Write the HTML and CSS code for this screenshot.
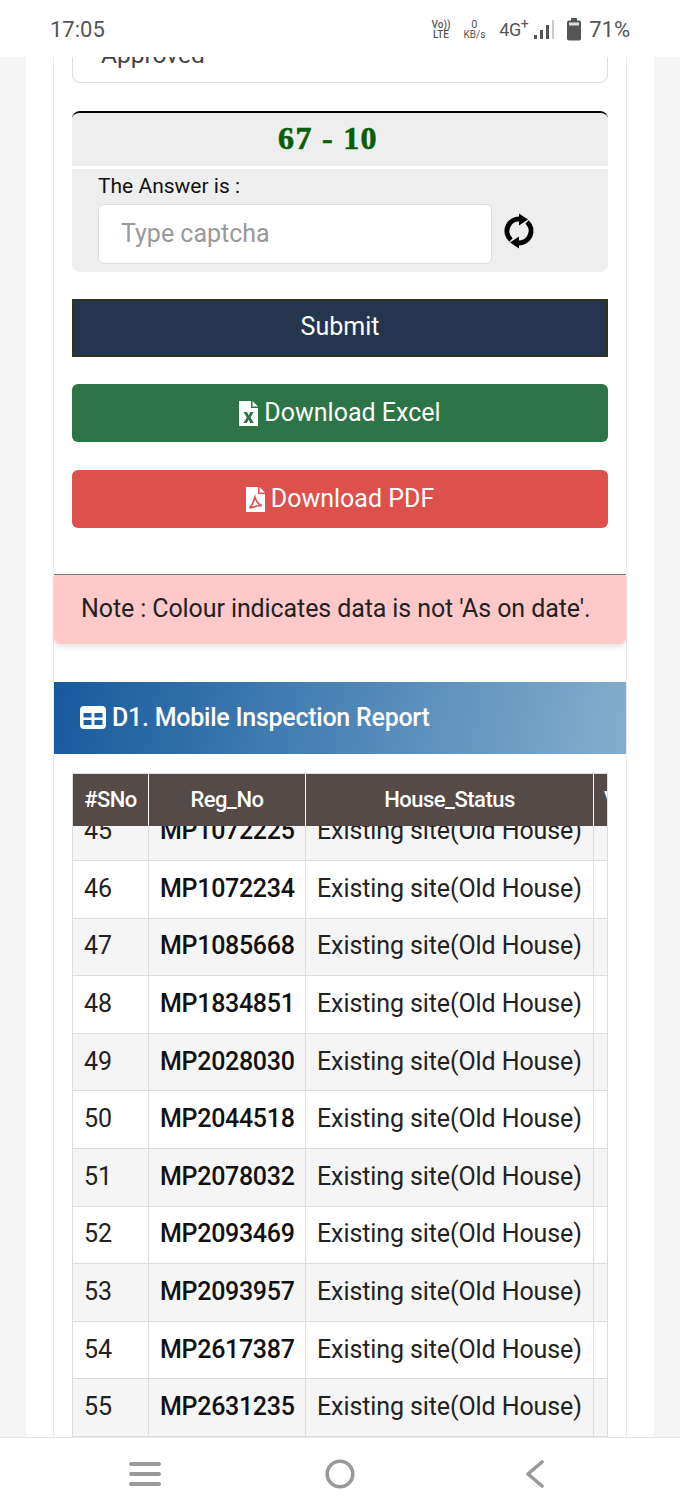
FILE: index.html
```html
<!DOCTYPE html>
<html lang="en">

<head>
    <meta charset="UTF-8">
    <meta name="viewport" content="width=device-width, initial-scale=1.0">
    <title>Mobile Inspection Report</title>
    <link rel="stylesheet" href="styles.css">
</head>

<body>
    <header class="status-bar">
        <span class="clock">17:05</span>
        <div class="status-icons">
            <span class="volte">Vo))<br>LTE</span>
            <span class="speed"><b>0</b><br>KB/s</span>
            <span class="network">4G<sup>+</sup></span>
            <svg class="signal" width="21" height="20" viewBox="0 0 21 20">
                <rect x="0" y="15" width="3" height="4" fill="#555"/>
                <rect x="6" y="10" width="3" height="9" fill="#555"/>
                <rect x="12" y="5" width="3" height="14" fill="#555"/>
                <rect x="18" y="0" width="2" height="19" fill="#ccc"/>
            </svg>
            <svg class="battery" width="16" height="23" viewBox="0 0 16 23">
                <rect x="5" y="0" width="6" height="3" fill="#555"/>
                <rect x="1" y="2.5" width="14" height="20" rx="2" fill="#555"/>
                <rect x="3" y="4.5" width="10" height="3" fill="#ddd"/>
            </svg>
            <span class="percent">71%</span>
        </div>
    </header>

    <div class="viewport">
        <div class="page">
            <main class="card">
                <div class="form-area">
                    <div class="select-box">
                        <span>Approved</span>
                    </div>

                    <div class="captcha">
                        <div class="captcha-code">67 - 10</div>
                        <div class="captcha-answer">
                            <label for="captcha">The Answer is :</label>
                            <div class="captcha-row">
                                <input type="text" id="captcha" placeholder="Type captcha">
                                <svg class="refresh" width="32" height="36" viewBox="0 0 32 36">
                                    <path d="M18 6.2 A12 12 0 0 0 8 27" fill="none" stroke="#000" stroke-width="5"/>
                                    <path d="M14 29.8 A12 12 0 0 0 24 9" fill="none" stroke="#000" stroke-width="5"/>
                                    <path d="M16 0.5 L25 6.5 L16 12.5 Z" fill="#000"/>
                                    <path d="M16 35.5 L7 29.5 L16 23.5 Z" fill="#000"/>
                                </svg>
                            </div>
                        </div>
                    </div>

                    <button class="btn btn-submit" type="submit">Submit</button>
                    <button class="btn btn-excel" type="button">
                        <svg width="19" height="25" viewBox="0 0 19 25">
                            <path d="M0 0 H12 V7 H19 V25 H0 Z" fill="#fff"/>
                            <path d="M13.5 0 L19 5.5 H13.5 Z" fill="#fff"/>
                            <path d="M4.5 11 H8 L9.7 14.5 L11.4 11 H14.6 L11.5 16.5 L14.8 22 H11.3 L9.6 18.6 L7.9 22 H4.4 L7.8 16.5 Z" fill="#2d7446"/>
                        </svg>
                        Download Excel
                    </button>
                    <button class="btn btn-pdf" type="button">
                        <svg width="19" height="25" viewBox="0 0 19 25">
                            <path d="M0 0 H12 V7 H19 V25 H0 Z" fill="#fff"/>
                            <path d="M13.5 0 L19 5.5 H13.5 Z" fill="#fff"/>
                            <path d="M9 10 C8 13 7 18 3.5 21 C7 20 12 18.5 16 18.5 C12.5 17.5 10 14 9 10 Z" fill="none" stroke="#de504c" stroke-width="1.6"/>
                        </svg>
                        Download PDF
                    </button>
                </div>

                <div class="note">Note : Colour indicates data is not 'As on date'.</div>

                <section class="report">
                    <h2 class="report-title">
                        <svg width="26" height="23" viewBox="0 0 26 23">
                            <path fill-rule="evenodd" fill="#fff" d="M4 0 H22 A4 4 0 0 1 26 4 V19 A4 4 0 0 1 22 23 H4 A4 4 0 0 1 0 19 V4 A4 4 0 0 1 4 0 Z M3.5 7 V11.5 H11.5 V7 Z M14.5 7 V11.5 H22.5 V7 Z M3.5 14 V19 H11.5 V14 Z M14.5 14 V19 H22.5 V14 Z"/>
                        </svg>
                        D1. Mobile Inspection Report
                    </h2>

                    <div class="table-wrap">
                        <table class="report-table report-head">
                            <colgroup>
                                <col class="col-sno"><col class="col-reg"><col class="col-status"><col class="col-next">
                            </colgroup>
                            <thead>
                                <tr><th>#SNo</th><th>Reg_No</th><th>House_Status</th><th class="next-head">Village</th></tr>
                            </thead>
                        </table>
                        <div class="table-body">
                            <table class="report-table report-rows">
                                <colgroup>
                                    <col class="col-sno"><col class="col-reg"><col class="col-status"><col class="col-next">
                                </colgroup>
                                <tbody>
                                    <tr><td>45</td><td class="reg">MP1072225</td><td>Existing site(Old House)</td><td></td></tr>
                                    <tr><td>46</td><td class="reg">MP1072234</td><td>Existing site(Old House)</td><td></td></tr>
                                    <tr><td>47</td><td class="reg">MP1085668</td><td>Existing site(Old House)</td><td></td></tr>
                                    <tr><td>48</td><td class="reg">MP1834851</td><td>Existing site(Old House)</td><td></td></tr>
                                    <tr><td>49</td><td class="reg">MP2028030</td><td>Existing site(Old House)</td><td></td></tr>
                                    <tr><td>50</td><td class="reg">MP2044518</td><td>Existing site(Old House)</td><td></td></tr>
                                    <tr><td>51</td><td class="reg">MP2078032</td><td>Existing site(Old House)</td><td></td></tr>
                                    <tr><td>52</td><td class="reg">MP2093469</td><td>Existing site(Old House)</td><td></td></tr>
                                    <tr><td>53</td><td class="reg">MP2093957</td><td>Existing site(Old House)</td><td></td></tr>
                                    <tr><td>54</td><td class="reg">MP2617387</td><td>Existing site(Old House)</td><td></td></tr>
                                    <tr><td>55</td><td class="reg">MP2631235</td><td>Existing site(Old House)</td><td></td></tr>
                                </tbody>
                            </table>
                        </div>
                    </div>
                </section>
            </main>
        </div>
    </div>

    <nav class="nav-bar">
        <svg width="32" height="26" viewBox="0 0 32 26">
            <path d="M2 3 H30 M2 13 H30 M2 23 H30" stroke="#999" stroke-width="4" stroke-linecap="round"/>
        </svg>
        <svg width="30" height="30" viewBox="0 0 30 30">
            <circle cx="15" cy="15" r="12.8" fill="none" stroke="#999" stroke-width="3.6"/>
        </svg>
        <svg width="20" height="28" viewBox="0 0 20 28">
            <path d="M17 2 L3 14 L17 26" fill="none" stroke="#999" stroke-width="3.6" stroke-linecap="round" stroke-linejoin="round"/>
        </svg>
    </nav>
</body>

</html>
```

FILE: styles.css
```css
* {
    box-sizing: border-box;
}

html,
body {
    height: 100%;
}

body {
    margin: 0;
    display: flex;
    flex-direction: column;
    overflow: hidden;
    font-family: Roboto, "Liberation Sans", sans-serif;
    color: #222;
    background: #f5f5f5;
}

.status-bar {
    height: 57px;
    flex: none;
    padding: 2px 50px 0;
    display: flex;
    justify-content: space-between;
    align-items: center;
    background: white;
    color: #555;
}

.clock {
    font-size: 22px;
}

.status-icons {
    display: flex;
    align-items: center;
}

.volte,
.speed {
    font-size: 10px;
    line-height: 10px;
    text-align: center;
}

.volte {
    font-weight: 500;
}

.speed {
    margin-left: 13px;
}

.speed b {
    font-weight: 400;
    font-size: 11px;
}

.network {
    margin-left: 14px;
    font-size: 18px;
    letter-spacing: -0.5px;
}

.network sup {
    font-size: 14px;
    line-height: 0;
}

.signal {
    margin-left: 6px;
}

.battery {
    margin-left: 11px;
}

.percent {
    margin-left: 7px;
    font-size: 22px;
}

.viewport {
    flex: 1;
    min-height: 0;
    overflow: hidden;
    padding: 0 26px;
}

.page {
    background: white;
    padding: 0 27px;
}

.card {
    border-left: 1px solid #e9e9e9;
    border-right: 1px solid #e9e9e9;
    margin: 0;
}

.form-area {
    padding: 0 18px 46px;
}

.select-box {
    height: 60px;
    margin-top: -34px;
    padding: 16px 28px;
    border: 1px solid #ddd;
    border-radius: 0 0 8px 8px;
    font-size: 24.5px;
    color: #444;
}

.captcha {
    margin-top: 28px;
    border-top: 2px solid #000;
    border-radius: 8px;
    overflow: hidden;
}

.captcha-code {
    height: 53px;
    padding-right: 24px;
    background: #eee;
    font-family: "Liberation Serif", serif;
    font-size: 32px;
    font-weight: bold;
    letter-spacing: 1.3px;
    line-height: 50px;
    text-align: center;
    color: #0a5e0a;
    -webkit-text-stroke: 0.6px #0a5e0a;
}

.captcha-answer {
    margin-top: 3px;
    height: 103px;
    padding: 4px 26px;
    background: #eee;
}

.captcha-answer label {
    display: block;
    font-size: 21px;
    line-height: 26px;
    color: #111;
}

.captcha-row {
    margin-top: 5px;
    display: flex;
    align-items: center;
    gap: 11px;
}

.captcha-row input {
    width: 394px;
    height: 60px;
    padding: 0 22px 2px;
    border: 1px solid #ddd;
    border-radius: 6px;
    font-family: inherit;
    font-size: 25px;
    background: white;
}

.captcha-row input::placeholder {
    color: #999;
}

.refresh {
    margin-top: -6px;
}

.btn {
    width: 100%;
    height: 58px;
    margin-top: 27px;
    padding-bottom: 3px;
    display: flex;
    justify-content: center;
    align-items: center;
    gap: 6px;
    border: 0;
    border-radius: 6px;
    font-family: inherit;
    font-size: 25px;
    color: white;
}

.btn svg {
    margin-top: 2px;
}

.btn-submit {
    padding-bottom: 4px;
    background: #24364d;
    border: 2px solid #33321c;
    border-radius: 0;
}

.btn-excel {
    background: #2d7446;
}

.btn-pdf {
    margin-top: 28px;
    background: #de504c;
}

.note {
    height: 70px;
    padding: 0 27px 3px;
    display: flex;
    align-items: center;
    background: #ffc9c9;
    border-top: 1px solid #777;
    border-radius: 0 0 6px 6px;
    box-shadow: 0 3px 5px rgba(0, 0, 0, 0.1);
    font-size: 25px;
    letter-spacing: -0.1px;
    color: #222;
}

.report {
    margin-top: 38px;
}

.report-title {
    height: 72px;
    margin: 0;
    padding: 0 26px 2px;
    display: flex;
    align-items: center;
    gap: 6px;
    background: linear-gradient(100deg, #165a9e, #84aecd);
    font-size: 25px;
    font-weight: 500;
    letter-spacing: -0.25px;
    color: white;
}

.table-wrap {
    margin: 19px 18px 0;
    overflow: hidden;
    border-top: 1px solid #ddd;
    border-left: 1px solid #ddd;
    border-right: 1px solid #ddd;
}

.report-table {
    width: 700px;
    margin-left: -1px;
    border-collapse: collapse;
    table-layout: fixed;
}

.col-sno {
    width: 76px;
}

.col-reg {
    width: 157px;
}

.col-status {
    width: 288px;
}

.col-next {
    width: 179px;
}

.report-head th {
    height: 52px;
    padding: 0 0 2px;
    background: #544a47;
    border-left: 1px solid white;
    border-right: 1px solid white;
    font-size: 22px;
    font-weight: 500;
    letter-spacing: -0.5px;
    color: white;
}

.report-head .next-head {
    padding-left: 10px;
    text-align: left;
}

.table-body {
    overflow: hidden;
    height: 640px;
}

.report-rows {
    margin-top: -23.5px;
}

.report-rows td {
    height: 57.6px;
    padding: 0 11px 2px;
    border: 1px solid #ddd;
    font-size: 25px;
    letter-spacing: -0.1px;
    white-space: nowrap;
}

.report-rows .reg {
    font-weight: 500;
    letter-spacing: -0.3px;
    color: #111;
}

.report-rows tr:nth-child(odd) td {
    background: #f5f5f5;
}

.nav-bar {
    height: 74px;
    flex: none;
    padding: 0 47px 2px;
    display: grid;
    grid-template-columns: repeat(3, 1fr);
    justify-items: center;
    align-items: center;
    background: white;
    border-top: 1px solid #e6e6e6;
}
```
